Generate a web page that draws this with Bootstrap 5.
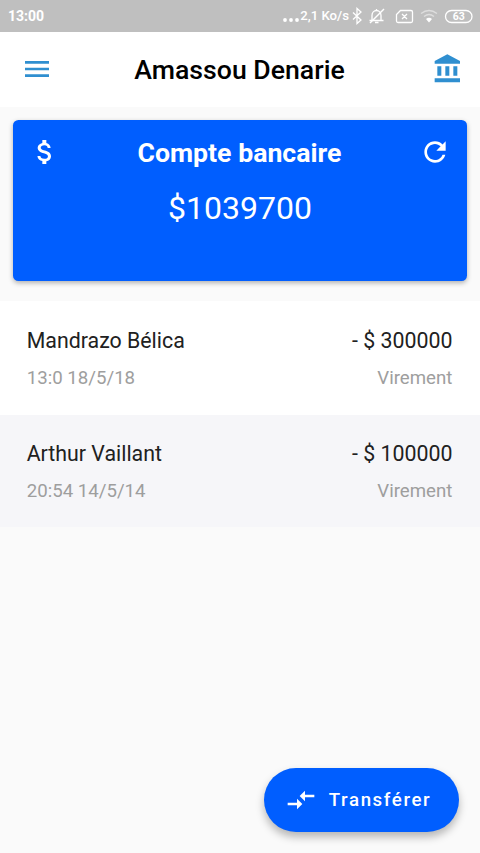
<!DOCTYPE html>
<html lang="fr">
<head>
<meta charset="utf-8">
<meta name="viewport" content="width=device-width, initial-scale=1">
<title>Compte bancaire</title>
<link href="https://cdn.jsdelivr.net/npm/bootstrap@5.3.0/dist/css/bootstrap.min.css" rel="stylesheet">
<style>
body{font-family:Roboto,"Liberation Sans",sans-serif;background:#fafafa;color:#212121;overflow:hidden}
svg{display:block;flex:none}
.mi{width:32px;height:32px;fill:currentColor}
.screen{height:853px}
.statusbar{height:32px;background:#bfbfbf;color:#fff;font-size:14px;font-weight:700;padding:0 7px 0 8px}
.net-speed{font-size:13.2px;font-weight:500;margin-right:2px}
.appbar{height:74.5px;background:#fff;color:#2f8fd0;padding:0 16px 0 21px}
.appbar h1{font-size:26.67px;font-weight:500;color:#000;line-height:32px;padding:2px 6px 0 0}
.account{margin:13.5px 13.3px 20px;height:161px;border:0;border-radius:5.5px;background:#005eff;color:#fff;padding:16px 16px 0;box-shadow:0 2px 5px rgba(0,0,0,.3)}
.account h2{font-size:26.67px;font-weight:700;line-height:32px;padding:1px 1px 0 0}
.balance{font-size:32px;line-height:38px;margin-top:20px}
.tx{padding:25px 27.6px 0 26.7px;height:113.5px;background:#fff;font-size:21.33px;line-height:30px}
.tx-alt{background:#f6f6f9;height:112px;padding-top:24px}
.tx-sub{font-size:18.67px;line-height:28px;color:#9e9e9e;margin-top:8px}
.fab{margin:0 21px 21.5px auto;width:195px;height:64px;border-radius:32px;background:#005eff;color:#fff;font-size:18.67px;font-weight:500;letter-spacing:1.6px;padding:0 0 0 20.8px;gap:12px;box-shadow:0 5px 9px rgba(0,0,0,.28);border:0}
.fab:hover{background:#005eff;color:#fff}
</style>
</head>
<body>
<div class="screen d-flex flex-column">
  <div class="statusbar d-flex align-items-center justify-content-between">
    <span>13:00</span>
    <div class="d-flex align-items-center">
      <svg width="17" height="16" fill="#fff"><circle cx="2" cy="12" r="1.900"/><circle cx="8" cy="12" r="1.900"/><circle cx="14" cy="12" r="1.900"/></svg>
      <span class="net-speed">2,1 Ko/s</span>
      <svg width="122" height="18" viewBox="0 0 122 18" fill="none" stroke="#fff" stroke-width="1.300">
        <path d="M2 5.500l8 7.500-4 3.500v-15l4 3.500-8 7.500"/>
        <path d="M21 13.500V8.500c0-3 2-5 4.500-5s4.500 2 4.500 5v5zM18.500 13.500h14M24 15.500h3.500M25.500 3.500V2"/>
        <path d="M19 16L33 2" stroke-width="1.500"/>
        <path d="M49.500 3.500H60q1.500 0 1.500 1.500v9q0 1.500-1.500 1.500H47q-1.500 0-1.500-1.500V7.500zM51 7l5 5M56 7l-5 5"/>
        <g stroke="#dedede"><path d="M70 6.500q8-6 16 0M73 9.500q5-4 10 0"/></g><path d="M75 12q3-2.500 6 0l-3 3.500z" fill="#fff" stroke="none"/>
        <rect x="94.500" y="3.500" width="26.500" height="12" rx="6"/>
        <text x="107.800" y="13.300" text-anchor="middle" font-family="Roboto,sans-serif" font-size="10.500" font-weight="700" fill="#fff" stroke="none">63</text>
      </svg>
    </div>
  </div>
  <header class="appbar d-flex align-items-center justify-content-between">
    <svg class="mi" viewBox="0 0 24 24"><path d="M3 18h18v-2H3v2zm0-5h18v-2H3v2zm0-7v2h18V6H3z"/></svg>
    <h1 class="m-0">Amassou Denarie</h1>
    <svg class="mi" viewBox="0 0 24 24"><path d="M4 10v7h3v-7H4zm6 0v7h3v-7h-3zM2 22h19v-3H2v3zm14-12v7h3v-7h-3zm-4.500-9L2 6v2h19V6l-9.500-5z"/></svg>
  </header>
  <section class="card account">
    <div class="d-flex justify-content-between">
      <svg class="mi" viewBox="0 0 24 24"><path d="M11.800 10.900c-2.270-.59-3-1.200-3-2.150 0-1.090 1.010-1.850 2.700-1.850 1.780 0 2.440.85 2.500 2.100h2.210c-.07-1.720-1.120-3.300-3.210-3.810V3h-3v2.160c-1.940.42-3.500 1.680-3.500 3.610 0 2.310 1.910 3.460 4.700 4.130 2.500.6 3 1.480 3 2.410 0 .69-.49 1.790-2.700 1.790-2.060 0-2.870-.92-2.980-2.100h-2.200c.12 2.190 1.760 3.420 3.680 3.830V21h3v-2.150c1.950-.37 3.500-1.500 3.500-3.550 0-2.840-2.430-3.810-4.700-4.400z"/></svg>
      <h2 class="m-0">Compte bancaire</h2>
      <svg class="mi" viewBox="0 0 24 24"><path d="M17.650 6.350C16.200 4.900 14.210 4 12 4c-4.420 0-7.990 3.580-7.990 8s3.570 8 7.990 8c3.730 0 6.840-2.550 7.730-6h-2.080c-.82 2.330-3.040 4-5.650 4-3.310 0-6-2.690-6-6s2.690-6 6-6c1.660 0 3.140.69 4.220 1.780L13 11h7V4l-2.350 2.350z"/></svg>
    </div>
    <div class="balance text-center">$1039700</div>
  </section>
  <main>
    <div class="tx">
      <div class="d-flex justify-content-between"><span>Mandrazo Bélica</span><span>- $ 300000</span></div>
      <div class="tx-sub d-flex justify-content-between"><span>13:0 18/5/18</span><span>Virement</span></div>
    </div>
    <div class="tx tx-alt">
      <div class="d-flex justify-content-between"><span>Arthur Vaillant</span><span>- $ 100000</span></div>
      <div class="tx-sub d-flex justify-content-between"><span>20:54 14/5/14</span><span>Virement</span></div>
    </div>
  </main>
  <button class="btn fab mt-auto d-flex align-items-center" type="button">
    <svg class="mi" viewBox="0 0 24 24"><path d="M9.010 14H2v2h7.010v3L13 15l-3.990-4v3zm5.980-1v-3H22V8h-7.010V5L11 9l3.990 4z"/></svg>
    <span>Transférer</span>
  </button>
</div>
<script src="https://cdn.jsdelivr.net/npm/bootstrap@5.3.0/dist/js/bootstrap.bundle.min.js"></script>
</body>
</html>
